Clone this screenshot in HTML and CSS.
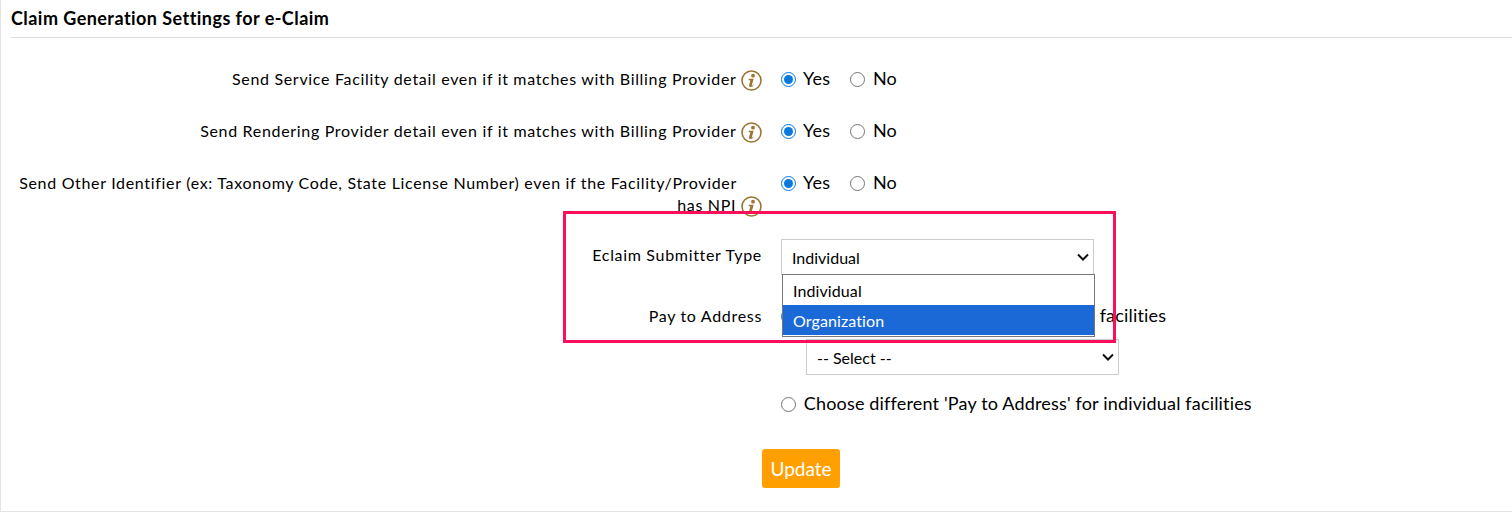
FILE: index.html
```html
<!DOCTYPE html>
<html lang="en">
<head>
    <meta charset="UTF-8">
    <title>Claim Generation Settings</title>
    <link rel="stylesheet" href="styles.css">
</head>
<body>
    <svg width="0" height="0" class="icon-defs">
        <symbol id="infoIcon" viewBox="0 0 21 21">
            <circle cx="10.5" cy="10.5" r="9.5" fill="#fff" stroke="#9c7433" stroke-width="1.6"/>
            <circle cx="12" cy="5.700" r="1.900" fill="#9c7433"/>
            <path d="M7.800 8.800h4.900l-1.900 6.400c-.1.4.3.5.6.2l.8-.8.5.4c-.9 1.300-2 2-3.200 2-1.200 0-1.700-.6-1.400-1.700l1.300-5.100H7.600z" fill="#9c7433"/>
        </symbol>
    </svg>

    <div class="panel">
        <h2 class="panel-title">Claim Generation Settings for e-Claim</h2>

        <div class="form-row">
            <div class="field-label label-info">Send Service Facility detail even if it matches with Billing Provider <svg class="info"><use href="#infoIcon"/></svg></div>
            <div class="field-value radio-pair">
                <label class="radio"><input type="radio" name="facility" checked> Yes</label>
                <label class="radio"><input type="radio" name="facility"> No</label>
            </div>
        </div>

        <div class="form-row">
            <div class="field-label label-info">Send Rendering Provider detail even if it matches with Billing Provider <svg class="info"><use href="#infoIcon"/></svg></div>
            <div class="field-value radio-pair">
                <label class="radio"><input type="radio" name="rendering" checked> Yes</label>
                <label class="radio"><input type="radio" name="rendering"> No</label>
            </div>
        </div>

        <div class="form-row">
            <div class="field-label label-info">Send Other Identifier (ex: Taxonomy Code, State License Number) even if the Facility/Provider has NPI <svg class="info"><use href="#infoIcon"/></svg></div>
            <div class="field-value radio-pair">
                <label class="radio"><input type="radio" name="other" checked> Yes</label>
                <label class="radio"><input type="radio" name="other"> No</label>
            </div>
        </div>

        <div class="form-row row-submitter">
            <div class="field-label label-select">Eclaim Submitter Type</div>
            <div class="field-value">
                <select class="select-box">
                    <option>Individual</option>
                    <option>Organization</option>
                </select>
            </div>
        </div>

        <div class="form-row row-address">
            <div class="field-label label-address">Pay to Address</div>
            <div class="field-value">
                <label class="radio"><input type="radio" name="address" checked> Choose Same 'Pay to Address' for all facilities</label>
                <select class="select-box select-nested">
                    <option>-- Select --</option>
                </select>
                <label class="radio radio-last"><input type="radio" name="address"> Choose different 'Pay to Address' for individual facilities</label>
            </div>
        </div>

        <div class="actions">
            <button class="update-btn">Update</button>
        </div>

        <!-- open dropdown list -->
        <ul class="select-popup">
            <li>Individual</li>
            <li class="selected">Organization</li>
        </ul>

        <!-- annotation box -->
        <div class="highlight-box"></div>
    </div>
</body>
</html>
```

FILE: styles.css
```css
body {
    margin: 0;
    font-family: "Lato", sans-serif;
    color: #000;
    background: #fff;
}

.icon-defs {
    position: absolute;
}

.panel {
    position: relative;
    height: 512px;
    padding-left: 11px;
    box-sizing: border-box;
    border-left: 1px solid #e3e3e3;
    border-bottom: 1px solid #e3e3e3;
    overflow: hidden;
}

.panel-title {
    margin: 0 0 0 -1px;
    height: 38px;
    box-sizing: border-box;
    padding-top: 8px;
    font-size: 18px;
    line-height: 20px;
    font-weight: 700;
    letter-spacing: 0.45px;
    border-bottom: 1px solid #dcdcdc;
}

.form-row {
    display: grid;
    grid-template-columns: 750px 1fr;
    margin-top: 29px;
}

.form-row + .form-row {
    margin-top: 28px;
}

.form-row + .row-submitter {
    margin-top: 22px;
}

.form-row + .row-address {
    margin-top: 29px;
}

.field-label {
    text-align: right;
    font-size: 16px;
    line-height: 22px;
    letter-spacing: 0.68px;
}

.label-info {
    padding: 1px 25px 0 0;
}

.label-select {
    padding-top: 5px;
}

.label-address {
    padding-top: 1px;
}

.info {
    width: 21px;
    height: 21px;
    margin-right: -25px;
    vertical-align: -6px;
}

.field-value {
    padding-left: 19px;
}

.radio-pair {
    display: flex;
    gap: 20px;
}

.radio {
    display: block;
    font-size: 18px;
    line-height: 22px;
    letter-spacing: 0.17px;
}

.radio input {
    width: 15px;
    height: 15px;
    margin: 0 3px 0 0;
    vertical-align: -2px;
    accent-color: #0a78dc;
}

.select-box {
    display: block;
    width: 313px;
    height: 36px;
    padding: 0 30px 0 10px;
    appearance: none;
    background: #fff url("data:image/svg+xml,%3Csvg xmlns='http://www.w3.org/2000/svg' width='12' height='8'%3E%3Cpath d='M1 1.500l5 5 5-5' fill='none' stroke='%23111' stroke-width='2'/%3E%3C/svg%3E") no-repeat right 4px center;
    border: 1px solid #ccc;
    border-radius: 0;
    font-family: inherit;
    font-size: 16px;
    color: #000;
}

.select-nested {
    margin: 13px 0 0 25px;
}

.radio-last {
    margin-top: 17px;
}

.actions {
    margin: 35px 0 0 750px;
}

.update-btn {
    display: block;
    width: 78px;
    height: 39px;
    padding: 0;
    background: #ff9f00;
    color: #fff;
    border: none;
    border-radius: 3px;
    font-family: inherit;
    font-size: 19px;
}

.select-popup {
    position: absolute;
    left: 781px;
    top: 274px;
    width: 311px;
    margin: 0;
    padding: 0 0 1px;
    list-style: none;
    background: #fff;
    border: 1px solid #767676;
    font-size: 16px;
    letter-spacing: 0.1px;
}

.select-popup li {
    height: 30px;
    line-height: 31px;
    padding-left: 10px;
}

.select-popup .selected {
    background: #1a69d6;
    color: #fff;
}

.highlight-box {
    position: absolute;
    left: 562px;
    top: 211px;
    width: 547px;
    height: 126px;
    border: 3px solid #fb0f58;
}
```
